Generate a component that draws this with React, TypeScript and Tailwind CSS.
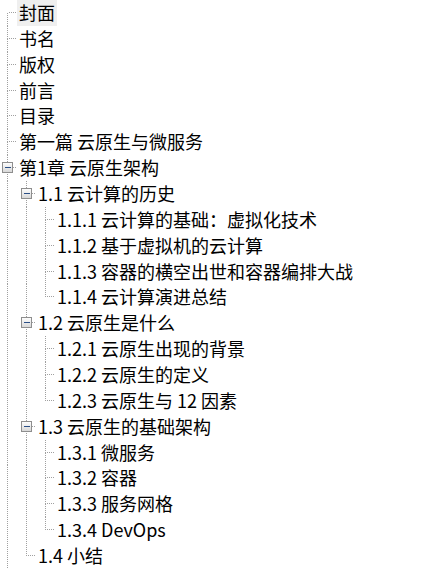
import React from "react"

type Node = { t: string; c?: Node[] }

const TOC: Node[] = [
  { t: "封面" },
  { t: "书名" },
  { t: "版权" },
  { t: "前言" },
  { t: "目录" },
  { t: "第一篇 云原生与微服务" },
  {
    t: "第1章 云原生架构",
    c: [
      {
        t: "1.1 云计算的历史",
        c: [
          { t: "1.1.1 云计算的基础：虚拟化技术" },
          { t: "1.1.2 基于虚拟机的云计算" },
          { t: "1.1.3 容器的横空出世和容器编排大战" },
          { t: "1.1.4 云计算演进总结" },
        ],
      },
      {
        t: "1.2 云原生是什么",
        c: [
          { t: "1.2.1 云原生出现的背景" },
          { t: "1.2.2 云原生的定义" },
          { t: "1.2.3 云原生与 12 因素" },
        ],
      },
      {
        t: "1.3 云原生的基础架构",
        c: [
          { t: "1.3.1 微服务" },
          { t: "1.3.2 容器" },
          { t: "1.3.3 服务网格" },
          { t: "1.3.4 DevOps" },
        ],
      },
      { t: "1.4 小结" },
    ],
  },
]

type Row = {
  t: string
  depth: number
  guides: boolean[] // ancestor levels whose line keeps going
  last: boolean
  first: boolean
  open: boolean
}

function flatten(nodes: Node[], depth: number, guides: boolean[], out: Row[]) {
  nodes.forEach((n, i) => {
    // the root list runs on below the visible area, so its line never ends
    const last = depth > 0 && i === nodes.length - 1
    out.push({
      t: n.t,
      depth,
      guides,
      last,
      first: depth === 0 && i === 0,
      open: !!n.c,
    })
    if (n.c) flatten(n.c, depth + 1, [...guides, !last], out)
  })
  return out
}

const ROWS = flatten(TOC, 0, [], [])
const H = 25.86
const STEP = 19
const LINE = "#a0a0a0"

function Guides({ row }: { row: Row }) {
  const w = row.depth * STEP + 17
  const x = row.depth * STEP + 7.5
  const mid = 12.5
  return (
    <svg width={w} height={H} className="shrink-0" shapeRendering="crispEdges">
      <defs>
        <linearGradient id="box" x1="0" y1="0" x2="0" y2="1">
          <stop offset="0" stopColor="#ffffff" />
          <stop offset="1" stopColor="#d6d6d6" />
        </linearGradient>
      </defs>
      {row.guides.map((on, i) =>
        on ? (
          <line key={i} x1={i * STEP + 7.5} y1={0} x2={i * STEP + 7.5} y2={H} stroke={LINE} strokeDasharray="1 1" />
        ) : null
      )}
      {!row.first && <line x1={x} y1={0} x2={x} y2={mid} stroke={LINE} strokeDasharray="1 1" />}
      {!row.last && <line x1={x} y1={mid} x2={x} y2={H} stroke={LINE} strokeDasharray="1 1" />}
      <line x1={x + 1} y1={mid} x2={w} y2={mid} stroke={LINE} strokeDasharray="1 1" />
      {row.open && (
        <g>
          <rect x={x - 5} y={mid - 5} width={10} height={10} fill="url(#box)" stroke="#8e8e8e" />
          <line x1={x - 2.5} y1={mid} x2={x + 3.5} y2={mid} stroke="#2b4f86" />
        </g>
      )}
    </svg>
  )
}

export default function App() {
  return (
    <div className="w-[442px] h-[570px] overflow-hidden bg-white text-black font-['Microsoft_YaHei','Noto_Sans_CJK_SC',sans-serif] text-[18px]">
      {ROWS.map((row, i) => (
        <div key={i} className="flex items-stretch h-[25.86px]">
          <Guides row={row} />
          <span
            className={
              "px-[2px] leading-[25px] whitespace-nowrap " + (i === 0 ? "bg-[#efefef]" : "")
            }
          >
            {row.t}
          </span>
        </div>
      ))}
    </div>
  )
}
